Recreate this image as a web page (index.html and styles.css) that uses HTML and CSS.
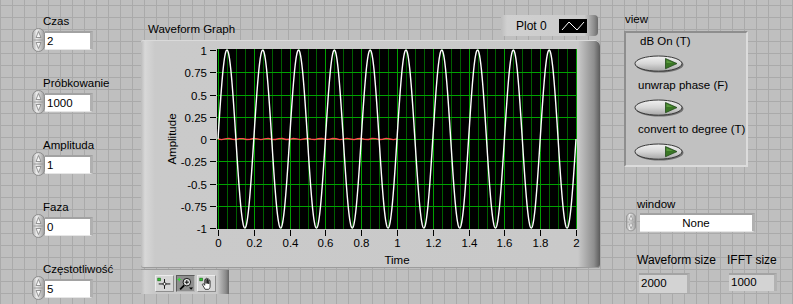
FILE: index.html
```html
<!DOCTYPE html>
<html lang="pl">
<head>
  <meta charset="UTF-8">
  <title>Waveform Graph</title>
  <meta name="viewport" content="width=device-width, initial-scale=1.0">
  <link rel="stylesheet" href="styles.css">
</head>

<body>
  <svg class="defs" width="0" height="0">
    <defs>
      <linearGradient id="spinGrad" x1="0" y1="0" x2="1" y2="0">
        <stop offset="0" stop-color="#a9a9a9"/>
        <stop offset="0.35" stop-color="#ececec"/>
        <stop offset="1" stop-color="#9c9c9c"/>
      </linearGradient>
      <linearGradient id="ledGrad" x1="0" y1="0" x2="0" y2="1">
        <stop offset="0" stop-color="#f2f2f2"/>
        <stop offset="0.5" stop-color="#d6d6d6"/>
        <stop offset="1" stop-color="#a6a6a6"/>
      </linearGradient>
      <symbol id="spin" viewBox="0 0 13 24">
        <rect x="0.5" y="0.5" width="12" height="23" rx="6" fill="url(#spinGrad)" stroke="#8c8c8c"/>
        <line x1="1.5" y1="12" x2="11.5" y2="12" stroke="#9a9a9a"/>
        <path d="M6.5 3.5 L9 9.5 H4 Z" fill="#f6f6f6" stroke="#808080" stroke-width="0.8"/>
        <path d="M6.5 20.5 L9 14.5 H4 Z" fill="#f6f6f6" stroke="#808080" stroke-width="0.8"/>
      </symbol>
      <symbol id="led" viewBox="0 0 50 18">
        <ellipse cx="25.5" cy="9.8" rx="24" ry="7.8" fill="#707070"/>
        <ellipse cx="24.5" cy="8.6" rx="23.5" ry="7.6" fill="url(#ledGrad)" stroke="#383838"/>
        <path d="M31.5 3.5 L43 8.6 L31.5 13.7 Z" fill="#3a7625" stroke="#22491a" stroke-width="0.8" stroke-linejoin="round"/>
        <path d="M32.5 5 L39 8 L32.5 8 Z" fill="#5a9a3e"/>
      </symbol>
    </defs>
  </svg>

  <div class="panel">
    <div class="inputs">
      <div class="ctl">
        <div class="lbl">Czas</div>
        <div class="num"><svg class="spin"><use href="#spin"/></svg><div class="box">2</div></div>
      </div>
      <div class="ctl">
        <div class="lbl">Próbkowanie</div>
        <div class="num"><svg class="spin"><use href="#spin"/></svg><div class="box">1000</div></div>
      </div>
      <div class="ctl">
        <div class="lbl">Amplituda</div>
        <div class="num"><svg class="spin"><use href="#spin"/></svg><div class="box">1</div></div>
      </div>
      <div class="ctl">
        <div class="lbl">Faza</div>
        <div class="num"><svg class="spin"><use href="#spin"/></svg><div class="box">0</div></div>
      </div>
      <div class="ctl">
        <div class="lbl">Częstotliwość</div>
        <div class="num"><svg class="spin"><use href="#spin"/></svg><div class="box">5</div></div>
      </div>
    </div>

    <div class="graph-col">
      <div class="graph-head">
        <div class="lbl">Waveform Graph</div>
        <div class="legend">
          <span>Plot 0</span>
          <svg class="swatch" viewBox="0 0 28 14">
            <rect width="28" height="14" fill="#000"/>
            <polyline points="3,11 10,3 18,11 25,3" fill="none" stroke="#fff" stroke-width="1"/>
          </svg>
        </div>
      </div>
      <div class="frame">
        <svg id="graph" width="459" height="228"></svg>
      </div>
      <div class="palette">
        <div class="tool">
          <svg viewBox="0 0 19 16">
            <rect x="2" y="2" width="3" height="3" fill="#33cc33" stroke="#1d5f1d" stroke-width="0.7"/>
            <line x1="3" y1="8.5" x2="16" y2="8.5" stroke="#000"/>
            <line x1="9.5" y1="3" x2="9.5" y2="14" stroke="#000"/>
            <circle cx="9.5" cy="8.5" r="1.6" fill="#fff" stroke="#000" stroke-width="0.8"/>
          </svg>
        </div>
        <div class="tool on">
          <svg viewBox="0 0 19 16">
            <path d="M2.5 1.5 V5.5 M0.5 3.5 H4.5" stroke="#33dd33" stroke-width="1.2"/>
            <line x1="8" y1="10" x2="3.5" y2="14.5" stroke="#000" stroke-width="2"/>
            <circle cx="11" cy="6.5" r="4.2" fill="#e4e4e4" stroke="#000" stroke-width="1"/>
            <path d="M11 4.2 V8.8 M8.7 6.5 H13.3" stroke="#000" stroke-width="1.1"/>
            <path d="M13.5 12.5 H18 L15.75 15 Z" fill="#000"/>
          </svg>
        </div>
        <div class="tool">
          <svg viewBox="0 0 19 16">
            <rect x="2" y="2" width="3" height="3" fill="#33cc33" stroke="#1d5f1d" stroke-width="0.7"/>
            <path d="M8 14.5 L5 9.5 C4.5 8.5 6 7.8 6.7 8.8 L7.5 10 L7.5 4 C7.5 3 9 3 9 4 L9 8 L9 2.8 C9 1.8 10.5 1.8 10.5 2.8 L10.5 8 L10.5 3.4 C10.5 2.4 12 2.4 12 3.4 L12 8.5 L12 5 C12 4 13.5 4 13.5 5 L13.5 11 C13.5 13 12.5 14.5 11.5 14.5 Z" fill="#fff" stroke="#000" stroke-width="0.8" stroke-linejoin="round"/>
          </svg>
        </div>
      </div>
    </div>

    <div class="side">
      <div class="lbl view">view</div>
      <div class="group">
        <div class="sw">
          <div class="lbl first">dB On (T)</div>
          <svg class="led"><use href="#led"/></svg>
        </div>
        <div class="sw">
          <div class="lbl">unwrap phase (F)</div>
          <svg class="led"><use href="#led"/></svg>
        </div>
        <div class="sw">
          <div class="lbl">convert to degree (T)</div>
          <svg class="led"><use href="#led"/></svg>
        </div>
      </div>

      <div class="ring">
        <div class="lbl">window</div>
        <div class="ring-row">
          <svg class="spin small"><use href="#spin"/></svg>
          <div class="ring-box">None</div>
        </div>
      </div>

      <div class="sizes">
        <div class="ind">
          <div class="lbl">Waveform size</div>
          <div class="out wide">2000</div>
        </div>
        <div class="ind">
          <div class="lbl">IFFT size</div>
          <div class="out">1000</div>
        </div>
      </div>
    </div>
  </div>

  <script>
    var NS = "http://www.w3.org/2000/svg";
    var svg = document.getElementById("graph");

    function add(tag, attrs, text) {
      var e = document.createElementNS(NS, tag);
      for (var k in attrs) e.setAttribute(k, attrs[k]);
      if (text != null) e.textContent = text;
      svg.appendChild(e);
      return e;
    }

    // plot area in frame coords
    var X0 = 77, X1 = 435, Y0 = 10, Y1 = 188;
    function px(t) { return X0 + (X1 - X0) * t / 2; }
    function py(v) { return (Y0 + Y1) / 2 - (Y1 - Y0) / 2 * v; }

    add("rect", { x: 76, y: 9, width: 360, height: 180, fill: "#000" });

    // vertical grid, minor every 0.05 s
    for (var i = 0; i <= 40; i++) {
      var x = Math.round(px(i * 0.05)) + 0.5;
      add("line", { x1: x, y1: 9, x2: x, y2: 189, stroke: i % 4 ? "#005f00" : "#00a000" });
    }

    var yLabels = ["1", "0.75", "0.5", "0.25", "0", "-0.25", "-0.5", "-0.75", "-1"];
    yLabels.forEach(function (s, j) {
      var y = Math.round(py(1 - j * 0.25)) + 0.5;
      if (j > 0 && j < 8) add("line", { x1: 76, y1: y, x2: 436, y2: y, stroke: "#00a000" });
      add("line", { x1: 69, y1: y, x2: 75, y2: y, stroke: "#000" });
      add("text", { x: 66, y: y + 4, "text-anchor": "end" }, s);
    });

    for (var k = 0; k <= 10; k++) {
      var tx = Math.round(px(k * 0.2)) + 0.5;
      add("line", { x1: tx, y1: 190, x2: tx, y2: 196, stroke: "#000" });
      var lab = k % 5 === 0 ? String(k / 5) : (k * 0.2).toFixed(1);
      add("text", { x: tx, y: 207, "text-anchor": "middle" }, lab);
    }

    add("text", { x: 31, y: 99, "text-anchor": "middle", "dominant-baseline": "central",
      transform: "rotate(-90 31 99)" }, "Amplitude");
    add("text", { x: 256, y: 224, "text-anchor": "middle" }, "Time");

    // red trace, near zero for the first second
    var red = [];
    for (var r = 0; r <= 50; r++) {
      var t = r / 50;
      red.push(px(t).toFixed(2) + "," + (py(0) + 0.6 * Math.sin(r * 1.7)).toFixed(2));
    }
    add("polyline", { points: red.join(" "), fill: "none", stroke: "#ff4c4c", "stroke-width": 1.4 });

    // sine, 5 Hz, 2 s
    var pts = [];
    for (var n = 0; n <= 2000; n++) {
      var tt = n / 1000;
      pts.push(px(tt).toFixed(2) + "," + py(Math.sin(2 * Math.PI * 5 * tt)).toFixed(2));
    }
    add("polyline", { points: pts.join(" "), fill: "none", stroke: "#fff", "stroke-width": 1.4 });
  </script>
</body>
</html>
```

FILE: styles.css
```css
body {
  margin: 0;
  font-family: 'Liberation Sans', Arial, sans-serif;
  font-size: 11.5px;
  color: #000;
}

.defs {
  display: block;
  width: 0;
  height: 0;
}

.panel {
  display: flex;
  width: 793px;
  height: 304px;
  overflow: hidden;
  background-color: #bfbfbf;
  background-image:
    linear-gradient(#aaaaaa 1px, transparent 1px),
    linear-gradient(90deg, #aaaaaa 1px, transparent 1px);
  background-size: 12px 12px;
  background-position: 0 5px, 0 0;
}

.lbl {
  line-height: 13px;
  white-space: nowrap;
}

/* left column */

.inputs {
  width: 141px;
  box-sizing: border-box;
  padding: 15px 0 0 32px;
  display: flex;
  flex-direction: column;
  gap: 25px;
}

.ctl {
  height: 37px;
}

.ctl .lbl {
  margin-left: 11px;
}

.num {
  display: flex;
  align-items: center;
  height: 24px;
}

.spin {
  width: 13px;
  height: 24px;
  flex: none;
}

.spin.small {
  width: 10px;
  height: 22px;
}

.box {
  box-sizing: border-box;
  width: 48px;
  height: 19px;
  padding-left: 2px;
  line-height: 16px;
  background: #fff;
  border-top: 2px solid #a2a2a2;
  border-right: 3px solid #b0b0b0;
  border-bottom: 1px solid #e6e6e6;
}

/* graph */

.graph-col {
  width: 459px;
  padding-top: 15px;
}

.graph-head {
  display: flex;
  justify-content: space-between;
  align-items: flex-end;
  height: 21px;
}

.graph-head .lbl {
  margin-left: 7px;
}

.legend {
  display: flex;
  align-items: center;
  box-sizing: border-box;
  width: 97px;
  height: 21px;
  margin-right: 2px;
  padding-left: 15px;
  font-size: 12px;
  border-radius: 2px 4px 4px 2px;
  background: linear-gradient(90deg, #bdbdbd 0, #d0d0d0 6px, #cbcbcb 86%, #8c8c8c 96%, #6a6a6a 100%);
}

.swatch {
  width: 28px;
  height: 14px;
  margin-left: 12px;
}

.frame {
  margin-top: 4px;
  height: 228px;
  border-radius: 2px 5px 3px 2px;
  background: linear-gradient(90deg, #bcbcbc 0, #d8d8d8 4px, #cacaca 14px, #c9c9c9 calc(100% - 22px), #8e8e8e calc(100% - 6px), #5c5c5c 100%);
  box-shadow: inset 0 1px 0 #dadada, inset 0 -1px 0 #9c9c9c;
}

#graph {
  display: block;
}

#graph text {
  font-family: 'Liberation Sans', Arial, sans-serif;
  font-size: 11.5px;
  fill: #000;
}

.palette {
  display: flex;
  gap: 2px;
  box-sizing: border-box;
  width: 88px;
  height: 25px;
  margin-top: 1px;
  padding: 6px 0 0 14px;
  background: linear-gradient(90deg, #bdbdbd 0, #d2d2d2 4px, #c9c9c9 12px, #c9c9c9 calc(100% - 12px), #8a8a8a calc(100% - 3px), #666 100%);
  box-shadow: inset 0 1px 0 #9c9c9c;
}

.tool {
  box-sizing: border-box;
  width: 19px;
  height: 17px;
  background: #d6d6d6;
  border: 1px solid #8e8e8e;
  border-top-color: #ececec;
  border-left-color: #ececec;
}

.tool.on {
  background: #8f8f8f;
  border-color: #5c5c5c #b8b8b8 #b8b8b8 #5c5c5c;
}

.tool svg {
  display: block;
  width: 17px;
  height: 15px;
}

/* right column */

.side {
  width: 193px;
  box-sizing: border-box;
  padding: 13px 0 0 24px;
}

.view {
  margin-left: 1px;
}

.group {
  box-sizing: border-box;
  width: 124px;
  height: 136px;
  margin-top: 5px;
  padding-top: 2px;
  background: #c1c1c1;
  border: 2px solid;
  border-color: #8e8e8e #dcdcdc #dcdcdc #8e8e8e;
}

.sw {
  height: 44px;
}

.sw .lbl {
  margin-left: 12px;
}

.sw .lbl.first {
  margin-left: 14px;
}

.led {
  display: block;
  width: 50px;
  height: 18px;
  margin: 7px 0 0 8px;
}

.ring {
  margin-top: 31px;
}

.ring .lbl {
  margin-left: 13px;
}

.ring-row {
  display: flex;
  align-items: center;
  gap: 4px;
  height: 22px;
  margin-left: 2px;
}

.ring-box {
  box-sizing: border-box;
  width: 115px;
  height: 19px;
  line-height: 16px;
  text-align: center;
  background: #fff;
  border-top: 2px solid #a2a2a2;
  border-right: 3px solid #b0b0b0;
  border-bottom: 1px solid #e6e6e6;
}

.sizes {
  display: flex;
  margin: 21px 0 0 13px;
}

.ind {
  display: flex;
  flex-direction: column;
}

.ind:first-child {
  width: 90px;
}

.ind .lbl {
  font-size: 12px;
}

.out {
  box-sizing: border-box;
  width: 48px;
  height: 18px;
  margin: 6px 0 0 2px;
  padding-left: 2px;
  line-height: 15px;
  background: #d3d3d3;
  border-top: 2px solid #a4a4a4;
  border-right: 3px solid #b2b2b2;
}

.out.wide {
  width: 51px;
  height: 20px;
  line-height: 17px;
}
```
